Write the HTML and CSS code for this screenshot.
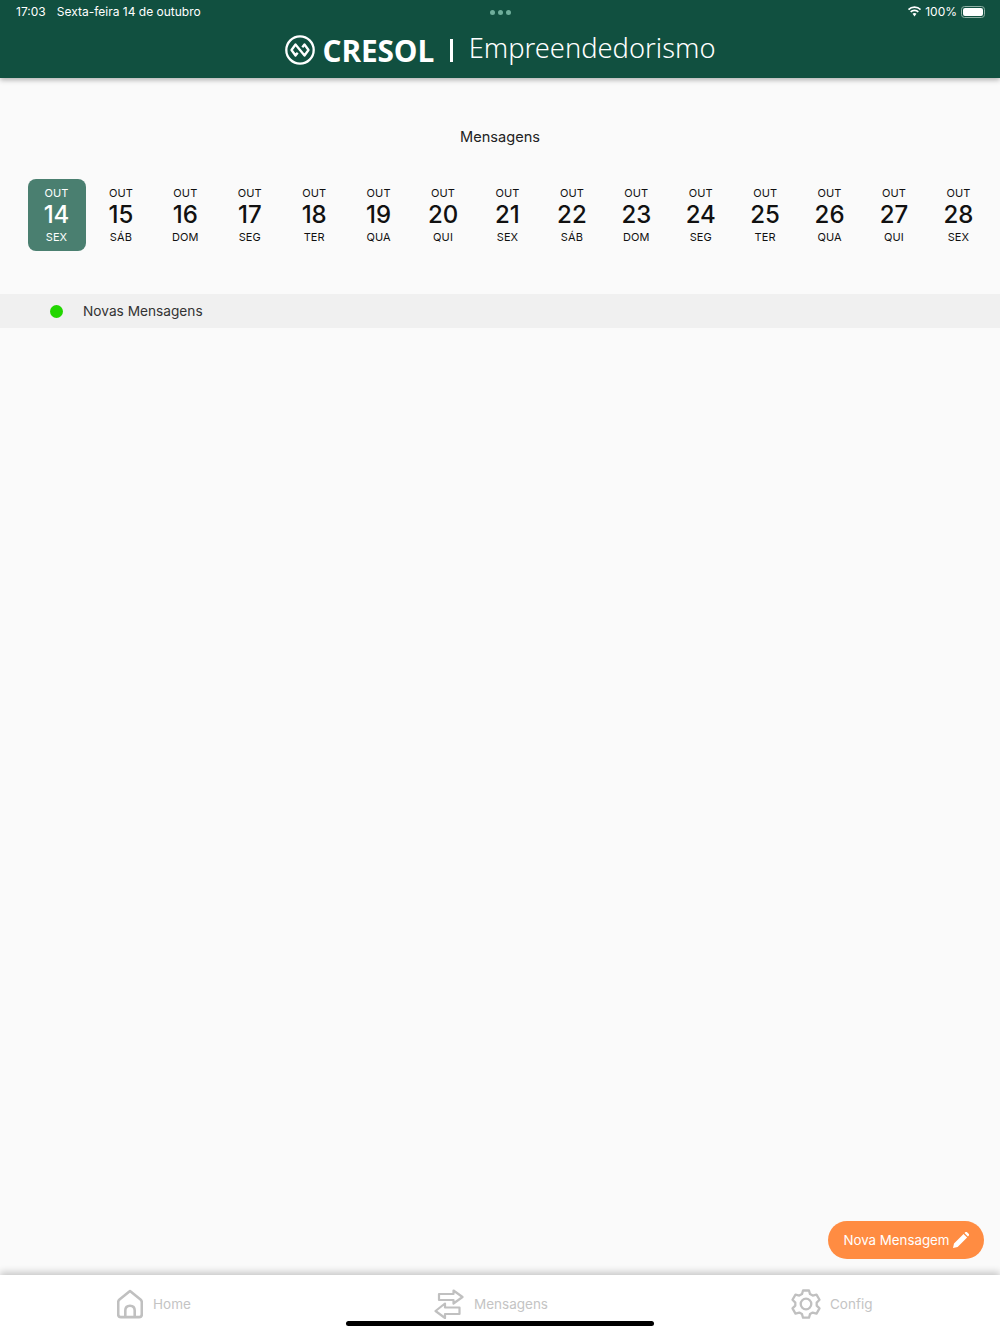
FILE: index.html
```html
<!DOCTYPE html>
<html lang="pt-BR">
<head>
<meta charset="utf-8">
<title>Mensagens</title>
<link rel="stylesheet" href="styles.css">
</head>
<body>
<div class="page">
  <header class="header">
    <div class="status">
      <div class="status-left"><span>17:03</span><span>Sexta-feira 14 de outubro</span></div>
      <div class="status-dots"><i></i><i></i><i></i></div>
      <div class="status-right">
        <svg class="wifi" width="15" height="11" viewBox="0 0 15 11"><path d="M7.500 2.100c2.100 0 4 .8 5.400 2.200l1.200-1.300A9.300 9.300 0 0 0 7.500.3 9.300 9.300 0 0 0 .9 3l1.200 1.300A7.600 7.600 0 0 1 7.500 2.100z" fill="#fff"/><path d="M7.500 5.300c1.200 0 2.300.5 3.200 1.200l1.200-1.300A6.200 6.200 0 0 0 7.500 3.500a6.200 6.200 0 0 0-4.400 1.700l1.200 1.300c.9-.7 2-1.200 3.200-1.200z" fill="#fff"/><path d="M7.500 7c-.8 0-1.500.3-2 .8l2 2.700 2-2.700c-.5-.5-1.200-.8-2-.8z" fill="#fff"/></svg>
        <span>100%</span>
        <span class="battery"><span class="battery-fill"></span></span>
      </div>
    </div>
    <div class="brand">
      <svg class="logo" width="30" height="30" viewBox="0 0 30 30" fill="none" stroke="#fff"><circle cx="15" cy="15" r="13.700" stroke-width="2.300"/><path d="M12.700 17.700L10.500 20.500 6.500 15l4-5.500 9 11 4-5.500-4-5.500-2.200 2.800" stroke-width="2.300" stroke-linejoin="round"/></svg>
      <span class="brand-name">CRESOL</span>
      <span class="brand-sep"></span>
      <span class="brand-sub">Empreendedorismo</span>
    </div>
  </header>

  <main class="main">
    <h1 class="title">Mensagens</h1>
    <div class="calendar">
      <div class="day day-active"><span class="mon">OUT</span><span class="num">14</span><span class="wd">SEX</span></div>
      <div class="day"><span class="mon">OUT</span><span class="num">15</span><span class="wd">SÁB</span></div>
      <div class="day"><span class="mon">OUT</span><span class="num">16</span><span class="wd">DOM</span></div>
      <div class="day"><span class="mon">OUT</span><span class="num">17</span><span class="wd">SEG</span></div>
      <div class="day"><span class="mon">OUT</span><span class="num">18</span><span class="wd">TER</span></div>
      <div class="day"><span class="mon">OUT</span><span class="num">19</span><span class="wd">QUA</span></div>
      <div class="day"><span class="mon">OUT</span><span class="num">20</span><span class="wd">QUI</span></div>
      <div class="day"><span class="mon">OUT</span><span class="num">21</span><span class="wd">SEX</span></div>
      <div class="day"><span class="mon">OUT</span><span class="num">22</span><span class="wd">SÁB</span></div>
      <div class="day"><span class="mon">OUT</span><span class="num">23</span><span class="wd">DOM</span></div>
      <div class="day"><span class="mon">OUT</span><span class="num">24</span><span class="wd">SEG</span></div>
      <div class="day"><span class="mon">OUT</span><span class="num">25</span><span class="wd">TER</span></div>
      <div class="day"><span class="mon">OUT</span><span class="num">26</span><span class="wd">QUA</span></div>
      <div class="day"><span class="mon">OUT</span><span class="num">27</span><span class="wd">QUI</span></div>
      <div class="day"><span class="mon">OUT</span><span class="num">28</span><span class="wd">SEX</span></div>
    </div>
    <div class="legend"><span class="legend-dot"></span><span>Novas Mensagens</span></div>
    <button class="fab">
      <span>Nova Mensagem</span>
      <svg width="16" height="16" viewBox="0 0 16 16"><path d="M0 16l1-4.600L10.500 1.900l3.600 3.600L4.600 15zM11.500.9l1-.9c.4-.3.9-.3 1.300 0l2.100 2.100c.3.400.3.900 0 1.300l-1 1z" fill="#fff"/></svg>
    </button>
  </main>

  <nav class="tabs">
    <div class="tab tab-home">
      <svg width="26" height="30" viewBox="0 0 26 30" fill="none" stroke="#c0c0c0" stroke-width="2.600" stroke-linejoin="round"><path d="M13 2L2.500 10.500c-.9.800-1.300 1.600-1.300 2.700v12c0 1.800.9 2.900 2.700 2.900h18.200c1.800 0 2.700-1.100 2.700-2.900v-12c0-1.100-.4-1.900-1.300-2.700z"/><path d="M8.300 28v-6.500c0-3 1.900-4.800 4.700-4.800s4.700 1.800 4.700 4.800V28"/></svg>
      <span>Home</span>
    </div>
    <div class="tab tab-msg">
      <svg width="30" height="30" viewBox="0 0 30 30" fill="none" stroke="#c0c0c0" stroke-width="2.200" stroke-linejoin="round"><path d="M5 5h14.500V1.500L28.500 8l-9 6.500V11H5z"/><path d="M25.500 18.500H11V14.500L1.500 22l9.500 7v-4h14.500z" fill="#fff"/></svg>
      <span>Mensagens</span>
    </div>
    <div class="tab tab-config">
      <svg width="30" height="30" viewBox="0 0 30 30" fill="none" stroke="#c0c0c0" stroke-width="2.300" stroke-linejoin="round"><path d="M12 1.500h6l1 3.600 2.700 1.500 3.800-1 3 5.200-2.800 2.800v3l2.800 2.800-3 5.200-3.800-1-2.700 1.500-1 3.600h-6l-1-3.600-2.700-1.500-3.800 1-3-5.200L4.300 16.600v-3L1.500 10.800l3-5.200 3.800 1L11 5.100z"/><circle cx="15" cy="15" r="5.300"/></svg>
      <span>Config</span>
    </div>
    <div class="home-bar"></div>
  </nav>
</div>
</body>
</html>
```
FILE: styles.css
```css
* { box-sizing: border-box; }
html, body { margin: 0; padding: 0; }
body { font-family: Inter, "Liberation Sans", sans-serif; background: #fafafa; }
.page { width: 1000px; height: 1334px; display: flex; flex-direction: column; overflow: hidden; }

.header { height: 78px; flex: none; background: #115040; color: #fff; box-shadow: 0 2px 5px rgba(0,0,0,.3); position: relative; z-index: 2; }
.status { height: 23px; display: grid; grid-template-columns: 1fr auto 1fr; align-items: center; padding: 0 15px 0 16px; font-size: 12px; }
.status-left { display: flex; gap: 11px; }
.status-dots { display: flex; gap: 3px; margin-top: 1px; }
.status-dots i { width: 5px; height: 5px; border-radius: 50%; background: #6fae9b; }
.status-right { display: flex; justify-content: flex-end; align-items: center; gap: 4px; }
.wifi { margin-right: -1px; }
.battery { width: 24px; height: 12px; border: 1px solid #8fb0a5; border-radius: 3.500px; padding: 1px; display: block; }
.battery-fill { display: block; width: 100%; height: 100%; background: #fff; border-radius: 2px; }

.brand { display: flex; align-items: center; justify-content: center; height: 55px; padding-bottom: 2px; }
.logo { margin-right: 8px; }
.brand-name { font-family: "Open Sans", sans-serif; font-weight: 700; font-size: 29.800px; letter-spacing: -.1px; line-height: 1; margin-top: 2px; }
.brand-sep { width: 2.500px; height: 23px; background: #fff; margin: 2px 16px 0 16px; }
.brand-sub { font-family: "Noto Sans", sans-serif; font-weight: 300; font-size: 27.300px; line-height: 1; margin-top: -4px; }

.main { flex: 1; position: relative; display: flex; flex-direction: column; }
.title { margin: 50px 0 0; height: 18px; font-weight: 400; font-size: 14.600px; line-height: 18px; text-align: center; color: #222; }
.calendar { display: grid; grid-template-columns: repeat(15, minmax(0, 64.43px)); padding: 0 0 0 24.300px; margin-top: 33px; }
.day { height: 72px; display: flex; flex-direction: column; align-items: center; padding-top: 7px; color: #111; }
.day-active { width: 58px; justify-self: center; background: #4a7f70; color: #fff; border-radius: 8px; }
.mon, .wd { font-size: 11px; line-height: 14px; letter-spacing: .1px; }
.num { font-size: 24px; line-height: 30px; font-weight: 500; }
.legend { margin-top: 43px; height: 34px; background: #f0f0f0; display: flex; align-items: center; padding: 0 0 1px 50px; gap: 20px; font-size: 13.700px; color: #333; }
.legend-dot { width: 13px; height: 13px; border-radius: 50%; background: #22d600; margin-top: 1px; }

.fab { position: absolute; right: 16px; top: 1143px; width: 156px; height: 38px; border: 0; border-radius: 19px; background: #ff8c42; color: #fff; font: 400 13.300px Inter, sans-serif; display: flex; align-items: center; justify-content: center; gap: 3px; padding: 0; }

.tabs { height: 59px; flex: none; background: #fff; position: relative; box-shadow: 0 -3px 7px rgba(0,0,0,.2); display: block; }
.tab { position: absolute; top: 14px; display: flex; align-items: center; gap: 10px; font-size: 13.500px; color: #c4c4c4; }
.tab-home { left: 117px; }
.tab-msg { left: 434px; }
.tab-config { left: 791px; gap: 9px; }
.home-bar { position: absolute; left: 346px; bottom: 8px; width: 308px; height: 5px; background: #000; border-radius: 3px; }
```
